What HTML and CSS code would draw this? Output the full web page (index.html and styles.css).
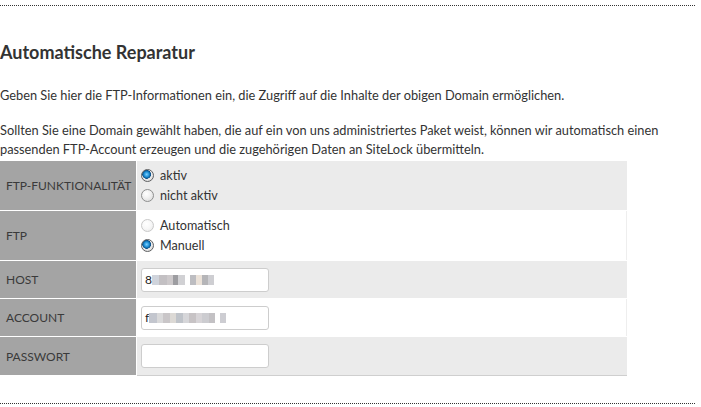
FILE: index.html
```html
<!DOCTYPE html>
<html lang="de">
<head>
<meta charset="utf-8">
<title>Automatische Reparatur</title>
<link rel="stylesheet" href="styles.css">
</head>
<body>
<div class="page">
  <div class="rule rule-top"></div>
  <h2 class="title">Automatische Reparatur</h2>
  <p class="intro">Geben Sie hier die FTP-Informationen ein, die Zugriff auf die Inhalte der obigen Domain ermöglichen.</p>
  <p class="note">Sollten Sie eine Domain gewählt haben, die auf ein von uns administriertes Paket weist, können wir automatisch einen passenden FTP-Account erzeugen und die zugehörigen Daten an SiteLock übermitteln.</p>
  <div class="form">
    <div class="label tall">FTP-FUNKTIONALITÄT</div>
    <div class="value tall shade">
      <label class="opt"><span class="radio on"></span>aktiv</label>
      <label class="opt"><span class="radio"></span>nicht aktiv</label>
    </div>
    <div class="label tall">FTP</div>
    <div class="value tall plain">
      <label class="opt"><span class="radio off"></span>Automatisch</label>
      <label class="opt"><span class="radio on"></span>Manuell</label>
    </div>
    <div class="label short">HOST</div>
    <div class="value short shade">
      <div class="field"><span class="first">8</span><span class="px" style="background:#c8ccd6;width:7px"></span><span class="px" style="background:#b9b5b8;width:8px"></span><span class="px" style="background:#c4c0c2;width:6px"></span><span class="px" style="background:#8c8c90;width:5px"></span><span class="px" style="background:#c9c9cc;width:7px"></span><span class="gap"></span><span class="px" style="background:#b2b2b6;width:6px"></span><span class="px" style="background:#e8ddd2;width:6px"></span><span class="px" style="background:#a8a8ac;width:6px"></span><span class="px" style="background:#c6c6ca;width:6px"></span></div>
    </div>
    <div class="label short">ACCOUNT</div>
    <div class="value short plain">
      <div class="field"><span class="first">f</span><span class="px" style="background:#b8bcc6;width:8px"></span><span class="px" style="background:#d2d2d4;width:6px"></span><span class="px" style="background:#c0bcbe;width:7px"></span><span class="px" style="background:#d6d2ce;width:6px"></span><span class="px" style="background:#b4b8c0;width:7px"></span><span class="px" style="background:#cfcfd2;width:6px"></span><span class="px" style="background:#bdb8bb;width:7px"></span><span class="px" style="background:#d0ccd0;width:6px"></span><span class="px" style="background:#c3c3c8;width:7px"></span><span class="px" style="background:#b9b6ba;width:6px"></span><span class="gap"></span><span class="px" style="background:#c4c4ca;width:6px"></span></div>
    </div>
    <div class="label short last">PASSWORT</div>
    <div class="value short shade last">
      <div class="field"></div>
    </div>
  </div>
  <div class="rule rule-bottom"></div>
</div>
</body>
</html>
```
FILE: styles.css
```css
html, body {
  margin: 0;
  padding: 0;
  background: #fff;
}
body {
  font-family: Lato, "Open Sans", sans-serif;
  color: #333;
  font-size: 12.8px;
}
.page {
  width: 695px;
  padding-top: 5px;
}
.rule {
  border-top: 1px dotted #333;
}
.title {
  margin: 35px 0 0;
  font-size: 18px;
  line-height: 22px;
  font-weight: bold;
  color: #333;
}
.intro {
  margin: 23px 0 0;
  line-height: 19px;
}
.note {
  margin: 16px 0 0;
  line-height: 19px;
  width: 690px;
}
.form {
  display: grid;
  grid-template-columns: 136px 490px;
  row-gap: 1px;
  column-gap: 1px;
  margin-top: 2px;
}
.label {
  background: #a4a4a4;
  color: #3a3a3a;
  display: flex;
  align-items: center;
  padding-left: 6px;
  font-size: 12px;
}
.value {
  display: flex;
  flex-direction: column;
  justify-content: center;
  padding-left: 4px;
}
.tall { height: 49px; }
.short { height: 37px; }
.last { height: 38px; }
.value.last { border-bottom: 1px solid #cfcfcf; }
.shade { background: #ebebeb; }
.plain { background: #fff; border-right: 1px solid #eee; }
.opt {
  display: flex;
  align-items: center;
  height: 20px;
  color: #333;
  font-size: 12.6px;
}
.radio {
  width: 11px;
  height: 11px;
  border-radius: 50%;
  border: 1px solid #8e8f8f;
  background: radial-gradient(circle at 40% 35%, #ffffff 0%, #f2f2f2 40%, #d4d4d4 100%);
  margin-right: 6px;
  box-sizing: content-box;
}
.radio.off {
  border-color: #c9c9c9;
  background: radial-gradient(circle at 40% 35%, #ffffff 0%, #f7f7f7 50%, #e6e6e6 100%);
}
.radio.on {
  background:
    radial-gradient(circle at 42% 40%, #7fd0ff 0%, #1c8fd6 28%, #0d4f86 45%, rgba(0,0,0,0) 50%),
    radial-gradient(circle at 40% 35%, #ffffff 0%, #ececec 50%, #cfcfcf 100%);
  border-color: #5f6062;
}
.field {
  width: 123px;
  height: 22px;
  border: 1px solid #cdcdcd;
  border-radius: 3px;
  background: #fff;
  display: flex;
  align-items: center;
  padding-left: 3px;
  box-sizing: content-box;
}
.first {
  color: #222;
  font-size: 12px;
}
.px {
  display: inline-block;
  height: 10px;
  opacity: 0.85;
}
.gap {
  display: inline-block;
  width: 5px;
}
.rule-bottom {
  margin-top: 27px;
}
```
